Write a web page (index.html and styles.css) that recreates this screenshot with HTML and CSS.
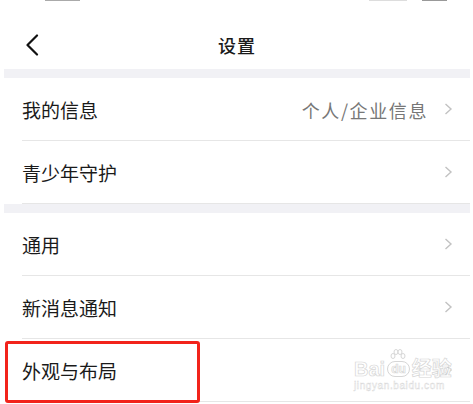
FILE: index.html
```html
<!DOCTYPE html>
<html lang="zh-CN">
<head>
    <meta charset="UTF-8">
    <meta name="viewport" content="width=device-width, initial-scale=1.0">
    <title>设置</title>
    <link rel="stylesheet" href="styles.css">
</head>
<body>
    <div class="status-bar">
        <span class="status-time"></span>
        <span class="status-signal"></span>
        <span class="status-battery"></span>
    </div>

    <div class="header">
        <button class="back-button">
            <svg width="14" height="22" viewBox="0 0 14 22"><path d="M12 1.5 L2.5 11 L12 20.5" fill="none" stroke="#111" stroke-width="2.2" stroke-linecap="round" stroke-linejoin="round"/></svg>
        </button>
        <h1>设置</h1>
    </div>

    <div class="settings">
        <div class="group-gap"></div>
        <div class="row">
            <span class="row-title">我的信息</span>
            <span class="row-value">个人/企业信息</span>
            <svg class="chevron" width="9" height="12" viewBox="0 0 9 12"><path d="M1.5 1 L7 6 L1.5 11" fill="none" stroke="#c2c2c2" stroke-width="1.4"/></svg>
        </div>
        <div class="row">
            <span class="row-title">青少年守护</span>
            <svg class="chevron" width="9" height="12" viewBox="0 0 9 12"><path d="M1.5 1 L7 6 L1.5 11" fill="none" stroke="#c2c2c2" stroke-width="1.4"/></svg>
        </div>

        <div class="group-gap"></div>
        <div class="row">
            <span class="row-title">通用</span>
            <svg class="chevron" width="9" height="12" viewBox="0 0 9 12"><path d="M1.5 1 L7 6 L1.5 11" fill="none" stroke="#c2c2c2" stroke-width="1.4"/></svg>
        </div>
        <div class="row">
            <span class="row-title">新消息通知</span>
            <svg class="chevron" width="9" height="12" viewBox="0 0 9 12"><path d="M1.5 1 L7 6 L1.5 11" fill="none" stroke="#c2c2c2" stroke-width="1.4"/></svg>
        </div>
        <div class="row row-marked">
            <span class="row-title">外观与布局</span>
            <svg class="chevron" width="9" height="12" viewBox="0 0 9 12"><path d="M1.5 1 L7 6 L1.5 11" fill="none" stroke="#c2c2c2" stroke-width="1.4"/></svg>
            <div class="highlight-box"></div>
            <div class="watermark">
                <div class="watermark-logo">
                    <span>Bai</span>
                    <span class="paw-bubble">
                        <svg class="paw" width="16" height="13" viewBox="0 0 16 13">
                            <g fill="#fff" stroke="#d6d6d6" stroke-width="1">
                                <ellipse cx="3" cy="7" rx="2" ry="2.5"/>
                                <ellipse cx="6" cy="3" rx="2" ry="2.5"/>
                                <ellipse cx="10" cy="3" rx="2" ry="2.5"/>
                                <ellipse cx="13" cy="7" rx="2" ry="2.5"/>
                            </g>
                        </svg>
                        du
                    </span>
                    <span>经验</span>
                </div>
                <span class="watermark-url">jingyan.baidu.com</span>
            </div>
        </div>
    </div>
</body>
</html>
```

FILE: styles.css
```css
:root {
    --page-bg: #ffffff;
    --gap-bg: #f1f1f5;
    --line-color: #e6e6e6;
    --text-primary: #1a1a1a;
    --text-secondary: #777;
    --mark-color: #f2231b;
    --watermark: #d6d6d6;
}

body {
    font-family: "Noto Sans CJK SC", "Noto Sans", sans-serif;
    background-color: var(--page-bg);
    color: var(--text-primary);
    margin: 0;
    width: 473px;
    height: 404px;
    overflow: hidden;
}

.status-bar {
    display: flex;
    height: 3px;
    align-items: flex-start;
}

.status-time {
    width: 35px;
    height: 1px;
    margin-left: 45px;
    background-color: #aaa;
}

.status-signal {
    width: 38px;
    height: 1px;
    margin-left: auto;
    background-color: #ddd;
}

.status-battery {
    width: 25px;
    height: 1px;
    margin: 0 26px 0 15px;
    background-color: #999;
}

.header {
    position: relative;
    height: 66px;
    display: flex;
    align-items: flex-start;
    justify-content: center;
}

.back-button {
    position: absolute;
    left: 25px;
    top: 31px;
    background: none;
    border: none;
    padding: 0;
    width: 14px;
    height: 22px;
}

h1 {
    margin: 29px 0 0 1px;
    font-size: 18px;
    font-weight: 500;
    letter-spacing: 1px;
}

.settings {
    margin: 0 3px 0 4px;
}

.group-gap {
    height: 9px;
    background-color: var(--gap-bg);
}

.row {
    position: relative;
    display: flex;
    align-items: center;
    height: 62px;
    margin-left: 18px;
    padding-right: 17px;
    border-bottom: 1px solid var(--line-color);
}

.row-title {
    font-size: 19px;
    flex: 1;
    padding-top: 1px;
}

.row-value {
    font-size: 18px;
    color: var(--text-secondary);
    letter-spacing: 1.6px;
    margin-right: 16px;
    padding-top: 1px;
}

.chevron {
    display: block;
}

.highlight-box {
    position: absolute;
    left: -17px;
    top: 2px;
    width: 189px;
    height: 56px;
    border: 3px solid var(--mark-color);
    border-radius: 3px;
}

.watermark {
    position: absolute;
    left: 332px;
    top: 20px;
    display: flex;
    flex-direction: column;
    align-items: flex-start;
    font-family: "Liberation Sans", "Noto Sans CJK SC", sans-serif;
    color: #fff;
    -webkit-text-stroke: 0.7px var(--watermark);
}

.watermark-logo {
    display: flex;
    align-items: center;
    font-size: 20px;
    font-weight: bold;
    line-height: 20px;
}

.paw-bubble {
    position: relative;
    font-size: 12px;
    line-height: 14px;
    padding: 0 3px;
    margin: 0 2px;
    border: 1px solid var(--watermark);
    border-radius: 8px;
}

.paw {
    position: absolute;
    left: 2px;
    top: -13px;
}

.watermark-url {
    font-size: 10px;
    line-height: 12px;
    letter-spacing: 0.6px;
    margin-top: 1px;
    -webkit-text-stroke: 0.4px var(--watermark);
}
```
